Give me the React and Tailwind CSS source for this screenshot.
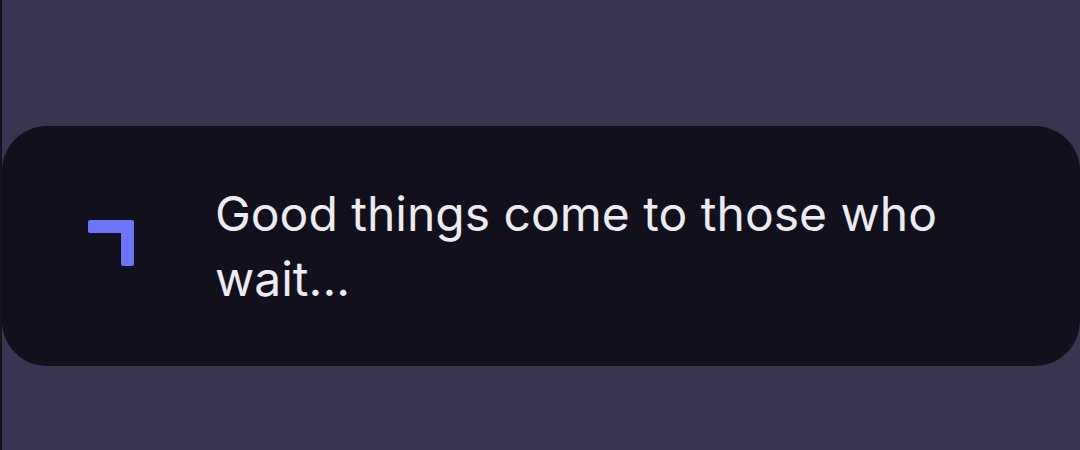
import React from 'react';

const CornerMark = () => (
  <svg width="46" height="46" viewBox="0 0 46 46" className="shrink-0">
    <path
      d="M2 0 H44 a2 2 0 0 1 2 2 V44 a2 2 0 0 1 -2 2 H35 a2 2 0 0 1 -2 -2 V13 H2 a2 2 0 0 1 -2 -2 V2 a2 2 0 0 1 2 -2 Z"
      fill="#6c75f7"
    />
  </svg>
);

const App = () => {
  return (
    <div className="w-[1080px] h-[450px] flex bg-[#3a3450] overflow-hidden">
      <div className="w-[2px] shrink-0 bg-[#15131d]"></div>
      <div className="flex-1 pt-[126px]">
        <div className="h-[240px] w-full rounded-[45px] bg-[#12101d] flex items-center pl-[86px] pr-[80px]">
          <div className="mt-[-6px]">
            <CornerMark />
          </div>
          <p
            className="ml-[81px] text-[48px] leading-[65px] text-[#ecebf1]"
            style={{ fontFamily: 'Inter, "Noto Sans", sans-serif' }}
          >
            Good things come to those who wait...
          </p>
        </div>
      </div>
    </div>
  );
};

export default App;
